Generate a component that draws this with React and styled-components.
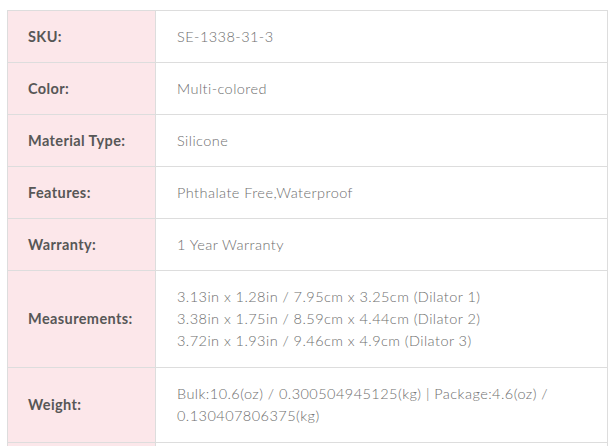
import React from 'react';
import styled, { createGlobalStyle } from 'styled-components';

const GlobalStyle = createGlobalStyle`
  body {
    margin: 0;
    background: #ffffff;
    font-family: 'Lato', 'Open Sans', sans-serif;
  }
`;

const Page = styled.div`
  padding: 10px 7px 0 7px;
`;

const SpecTable = styled.table`
  width: 601px;
  border-collapse: collapse;
  table-layout: fixed;
  font-size: 14px;
  line-height: 22px;
`;

const Row = styled.tr`
  border: 1px solid #dddddd;
`;

const Label = styled.th`
  width: 127px;
  padding: 15px 0 ${p => (p.$multi ? 15 : 14)}px 20px;
  background: #fce7ea;
  border: 1px solid #dddddd;
  text-align: left;
  font-weight: 700;
  font-size: 14.5px;
  color: #575757;
  vertical-align: middle;
  letter-spacing: 0.4px;
`;

const Value = styled.td`
  padding: 15px 20px ${p => (p.$multi ? 15 : 14)}px 21px;
  border: 1px solid #dddddd;
  color: #6e6e6e;
  font-weight: 300;
  font-size: 14.5px;
  vertical-align: middle;
  letter-spacing: 0.45px;
`;

const specs = [
  { label: 'SKU:', value: ['SE-1338-31-3'] },
  { label: 'Color:', value: ['Multi-colored'] },
  { label: 'Material Type:', value: ['Silicone'] },
  { label: 'Features:', value: ['Phthalate Free,Waterproof'] },
  { label: 'Warranty:', value: ['1 Year Warranty'] },
  {
    label: 'Measurements:',
    value: [
      '3.13in x 1.28in / 7.95cm x 3.25cm (Dilator 1)',
      '3.38in x 1.75in / 8.59cm x 4.44cm (Dilator 2)',
      '3.72in x 1.93in / 9.46cm x 4.9cm (Dilator 3)',
    ],
    multi: true,
  },
  {
    label: 'Weight:',
    value: ['Bulk:10.6(oz) / 0.300504945125(kg) | Package:4.6(oz) / 0.130407806375(kg)'],
    multi: true,
  },
  { label: '\u00a0', value: ['\u00a0'] },
];

const App = () => (
  <Page>
    <GlobalStyle />
    <SpecTable>
      <tbody>
        {specs.map((s, i) => (
          <Row key={i}>
            <Label $multi={s.multi}>{s.label}</Label>
            <Value $multi={s.multi}>
              {s.value.map((line, j) => (
                <div key={j}>{line}</div>
              ))}
            </Value>
          </Row>
        ))}
      </tbody>
    </SpecTable>
  </Page>
);

export default App;
